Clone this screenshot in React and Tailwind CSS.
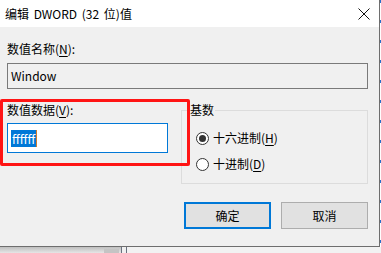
import React from 'react';

const FONT = "font-['Microsoft_YaHei_UI','Noto_Sans_CJK_SC',sans-serif]";

function Radio({ checked, children }) {
  return (
    <div className="flex items-center h-[16px]">
      <span className="w-[13px] h-[13px] rounded-full border border-[#333] bg-white flex items-center justify-center shrink-0">
        {checked && <span className="w-[7px] h-[7px] rounded-full bg-[#333]" />}
      </span>
      <span className="ml-[4px] leading-[16px]">{children}</span>
    </div>
  );
}

export default function App() {
  return (
    <div className={`relative w-[381px] h-[253px] overflow-hidden bg-white text-[12px] text-black ${FONT}`}>
      <div className="flex h-[247px]">
        {/* dialog */}
        <div className="flex flex-col w-[380px] border-r border-b border-[#6e6e6e]">
          <div className="h-[27px] bg-white flex items-center justify-between pl-[5px] pr-[9px] shrink-0">
            <span className="leading-[16px] [word-spacing:2px]">编辑 DWORD (32 位)值</span>
            <svg className="w-[12px] h-[12px]" viewBox="0 0 12 12" fill="none" stroke="#111" strokeWidth="1">
              <path d="M0.5 0.5l11 11M11.5 0.5l-11 11" />
            </svg>
          </div>

          <div className="flex-1 bg-[#f0f0f0] pl-[7px] pr-[11px] pt-[14px]">
            <div className="leading-[16px]">
              数值名称(<span className="underline underline-offset-2">N</span>):
            </div>
            <div className="mt-[6px] h-[26px] border border-[#7a7a7a] bg-[#f0f0f0] flex items-center pl-[3px] leading-[16px]">
              Window
            </div>

            <div className="flex mt-[13px]">
              <div className="w-[161px] shrink-0">
                <div className="leading-[16px]">
                  数值数据(<span className="underline underline-offset-2">V</span>):
                </div>
                <div className="mt-[5px] h-[30px] border border-[#0078d7] bg-white flex items-center pl-[3px]">
                  <span className="bg-[#0078d7] text-white leading-[17px] px-[1px]">ffffff</span>
                  <span className="w-px h-[17px] bg-[#d07a2a]" />
                </div>
              </div>

              <fieldset className="ml-[13px] flex-1 h-[82px] border border-[#dcdcdc] pl-[7px] pr-2">
                <legend className="leading-[16px] px-[1px]">基数</legend>
                <div className="flex flex-col gap-[10px] pt-[12px] pl-[7px]">
                  <Radio checked>
                    十六进制(<span className="underline underline-offset-2">H</span>)
                  </Radio>
                  <Radio>
                    十进制(<span className="underline underline-offset-2">D</span>)
                  </Radio>
                </div>
              </fieldset>
            </div>

            <div className="flex justify-end gap-[10px] mt-[18px]">
              <button className="w-[87px] h-[27px] border-2 border-[#0078d7] bg-[#e1e1e1] leading-[16px]">确定</button>
              <button className="w-[87px] h-[27px] border border-[#adadad] bg-[#e1e1e1] leading-[16px]">取消</button>
            </div>
          </div>
        </div>
        {/* background window edge */}
        <div className="w-px bg-[repeating-linear-gradient(to_bottom,#2a6fc9_0px,#2a6fc9_3px,#ffffff_3px,#ffffff_20px)]" />
      </div>

      {/* strip below dialog */}
      <div className="flex h-[6px] bg-[linear-gradient(to_bottom,#bfbfbf,#e6e6e6)]">
        <div className="w-[104px]" />
        <div className="w-[15px] mt-[2px] bg-[#c4c4c4]" />
        <div className="w-[2px]" />
        <div className="w-px bg-[#6b7280]" />
        <div className="w-[4px] bg-[#f0f0f0]" />
        <div className="w-px bg-[#6b7280]" />
        <div className="flex-1 bg-[#f2f2f2]" />
      </div>

      {/* red annotation box */}
      <div className="absolute left-0 top-[99px] w-[190px] h-[67px] border-[3px] border-[#ff1414] rounded-[2px] pointer-events-none" />
    </div>
  );
}
